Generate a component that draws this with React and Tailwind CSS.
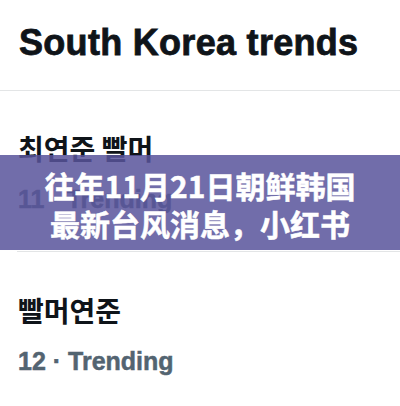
export default function App() {
  const sans = { fontFamily: '"Liberation Sans", Arial, sans-serif' };
  const kr = { fontFamily: '"Noto Sans CJK KR", sans-serif' };
  return (
    <div className="relative w-[400px] h-[406px] overflow-hidden bg-white text-[#0f1419]">
      <div className="pl-[19px] pt-[21px] pb-[25px]">
        <h1 className="text-[36px] leading-[44px] font-bold tracking-[0.3px] [-webkit-text-stroke:0.8px_#0f1419]" style={sans}>
          South Korea trends
        </h1>
      </div>
      <div className="h-px bg-[#e3e5e6]" />
      <div className="pl-[18px] pt-[40px] pb-[37px]">
        <div className="text-[28px] leading-[34px] font-bold" style={kr}>
          최연준 빨머
        </div>
        <div className="mt-[19px] text-[25px] leading-[30px] font-bold text-[#536471] [-webkit-text-stroke:0.5px_#536471]" style={sans}>
          11 · Trending
        </div>
      </div>
      <div className="ml-[17px] h-px bg-[#e3e5e6]" />
      <div className="pl-[18px] pt-[41px] pb-[37px]">
        <div className="text-[28px] leading-[34px] font-bold" style={kr}>
          빨머연준
        </div>
        <div className="mt-[19px] text-[25px] leading-[30px] font-bold text-[#536471] [-webkit-text-stroke:0.5px_#536471]" style={sans}>
          12 · Trending
        </div>
      </div>
      <div
        className="absolute left-0 right-0 top-[155px] h-[95px] bg-[rgba(88,83,155,0.85)] flex flex-col items-center pt-[11px] text-white text-[30px] leading-[38px] font-bold [-webkit-text-stroke:0.5px_#ffffff]"
        style={{ fontFamily: '"Noto Sans CJK SC", sans-serif' }}
      >
        <div>往年11月21日朝鲜韩国</div>
        <div>最新台风消息，小红书</div>
      </div>
    </div>
  );
}
